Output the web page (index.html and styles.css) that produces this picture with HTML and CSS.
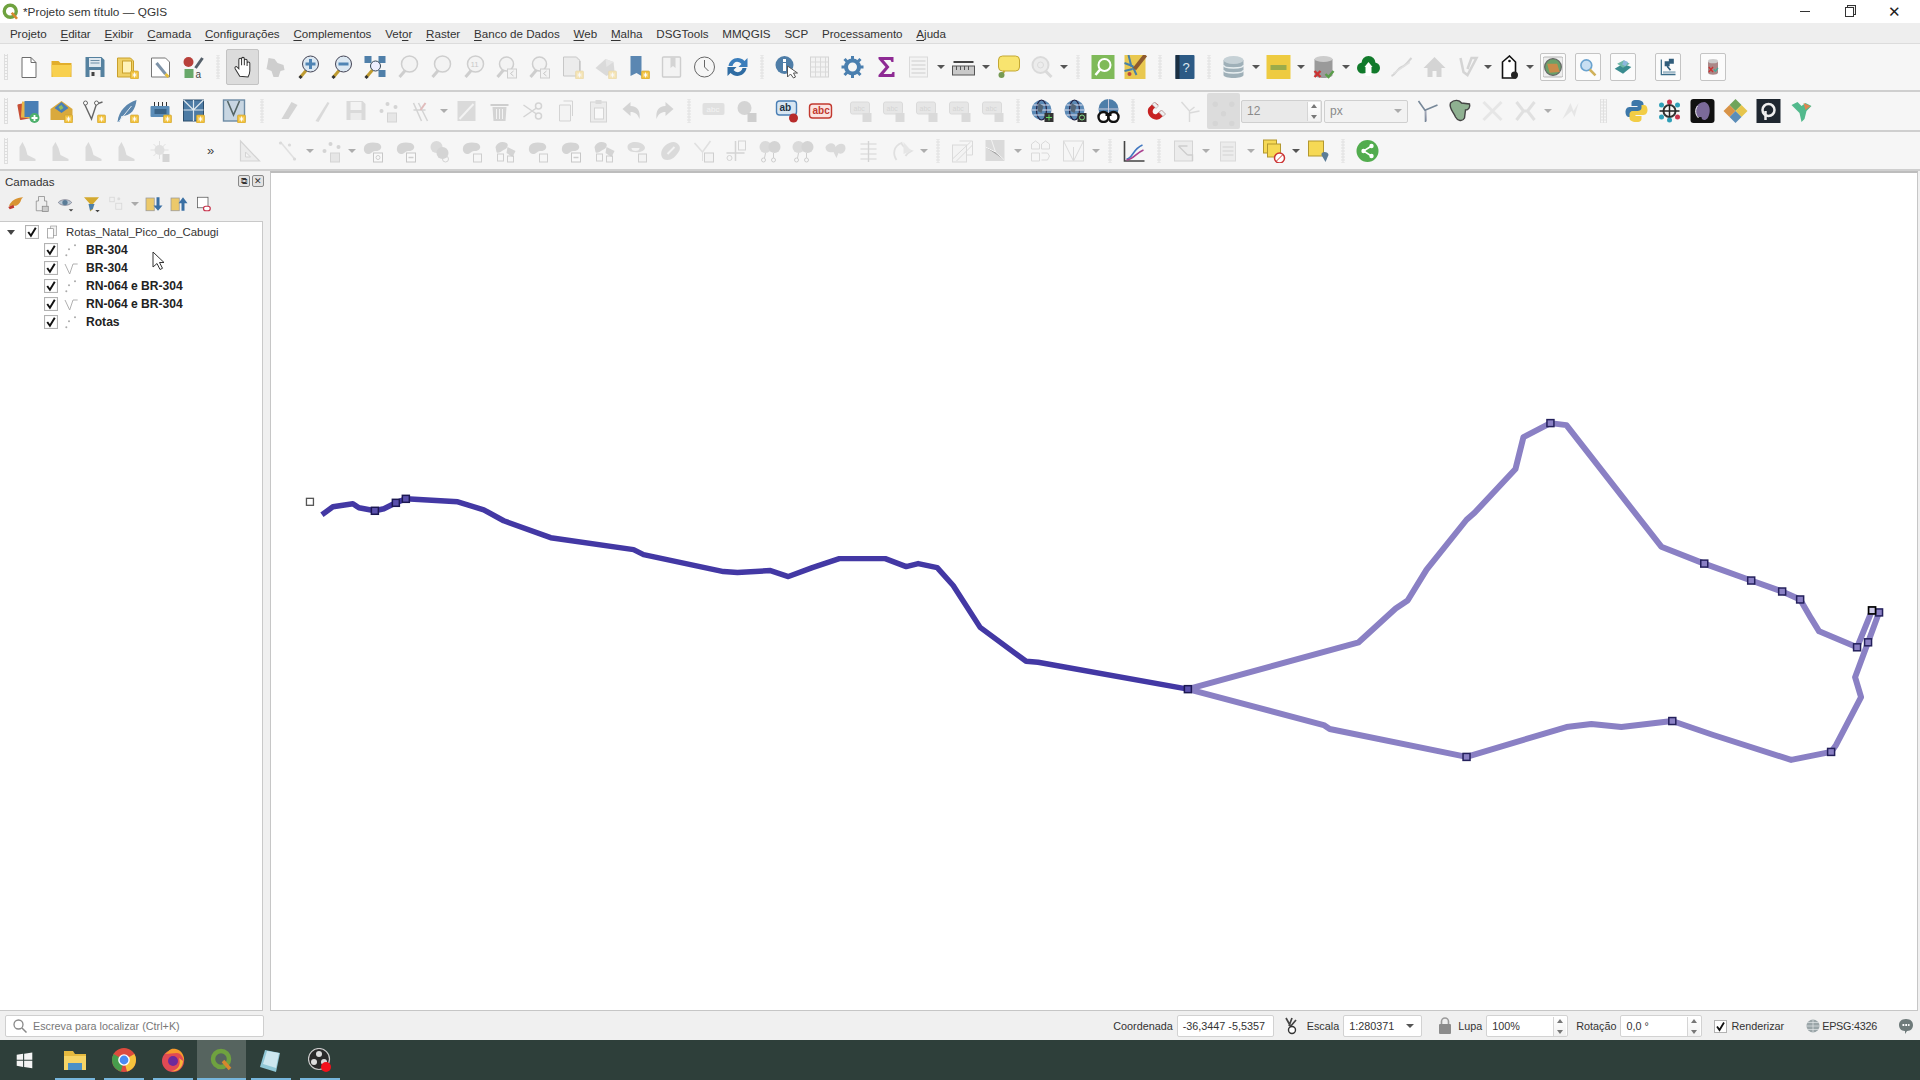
FILE: index.html
```html
<!DOCTYPE html>
<html lang="pt-BR">
<head>
<meta charset="utf-8">
<title>*Projeto sem título — QGIS</title>
<link rel="stylesheet" href="styles.css">
</head>
<body>
<svg class="defs" xmlns="http://www.w3.org/2000/svg">
<defs>
<g id="bdg"><rect x="15" y="16" width="8" height="8" rx="1" fill="#f2c23e" stroke="#c9a02c" stroke-width=".6"/><path d="M19 17.5v5M16.8 20h4.4M17.4 18.4l3.2 3.2M20.6 18.4l-3.2 3.2" stroke="#fff" stroke-width=".9"/></g>
<g id="blob"><path d="M3 7c2-4 9-4 13-3s5 5 2 7-5 0-7 2-5 3-7 1-2-4-1-7z" fill="#9a9a9a"/></g>
<g id="boxs"><rect x="12" y="14" width="9" height="9" fill="#fff" stroke="#777"/></g>
<symbol id="doc" viewBox="0 0 24 24"><path d="M5.500 2.500h9l5 5v15h-14z" fill="#fff" stroke="#6d6d6d"/><path d="M14.500 2.500v5h5" fill="none" stroke="#6d6d6d"/></symbol>
<symbol id="folder" viewBox="0 0 24 24"><path d="M2 6h7l2 2h11v14H2z" fill="#e2ae2c"/><path d="M2 10h20l-1 12H3z" fill="#f8d04f"/></symbol>
<symbol id="floppy" viewBox="0 0 24 24"><path d="M3 2h16l3 3v17H3z" fill="#55819f"/><rect x="6.500" y="3" width="12" height="9" fill="#dfe8ef"/><path d="M8 5.500h9M8 8h9" stroke="#6d8ea6"/><rect x="7" y="15" width="11" height="7" fill="#f3f3f3"/><rect x="9" y="17" width="3" height="4" fill="#444"/></symbol>
<symbol id="prj" viewBox="0 0 24 24"><path d="M2 3h13l3 3v16H2z" fill="#efd065" stroke="#c9a02c"/><rect x="7" y="6" width="9" height="12" fill="#fff3b9" stroke="#c9a02c"/><use href="#bdg"/></symbol>
<symbol id="layout" viewBox="0 0 24 24"><path d="M3 3h14l4 4v15H3z" fill="#fff" stroke="#777"/><path d="M8 8l9 11" stroke="#7e93a8" stroke-width="3"/><path d="M17 19l3 3" stroke="#e3bc3a" stroke-width="3"/></symbol>
<symbol id="style" viewBox="0 0 24 24"><circle cx="7" cy="7" r="5" fill="#b8403a"/><rect x="3" y="14" width="9" height="9" fill="#68a86a"/><path d="M14 13l7-10" stroke="#55606a" stroke-width="3"/><text x="14" y="23" class="svt" font-size="10" fill="#444">a</text></symbol>
<symbol id="hand" viewBox="0 0 24 24"><path d="M9 22l-5-8c-1-2 1-3 2-2l2 2V4c0-2 3-2 3 0v6-7c0-2 3-2 3 0v7-5c0-2 3-2 3 0v6-3c0-2 3-2 3 0v8c0 3-1 5-2 7z" fill="#fff" stroke="#333" stroke-width="1.100"/></symbol>
<symbol id="panmap" viewBox="0 0 24 24"><path d="M5 3l6 1 3 4 6 2 1 5-4 1-2 6h-5l-2-6-5-2 1-5z" fill="#888"/></symbol>
<g id="lens"><path d="M4 22l6-7" stroke="#bf9b30" stroke-width="3"/><path d="M3 23l2-2" stroke="#333" stroke-width="3"/></g>
<symbol id="zin" viewBox="0 0 24 24"><use href="#lens"/><circle cx="14" cy="9" r="8" fill="#dce8f2" stroke="#445"/><path d="M9 9h10M14 4v10" stroke="#4f84b4" stroke-width="3"/></symbol>
<symbol id="zout" viewBox="0 0 24 24"><use href="#lens"/><circle cx="14" cy="9" r="8" fill="#dce8f2" stroke="#445"/><path d="M9 9h10" stroke="#4f84b4" stroke-width="3"/></symbol>
<symbol id="zfull" viewBox="0 0 24 24"><use href="#lens"/><rect x="2" y="1" width="7" height="7" fill="#4f7fa9"/><rect x="16" y="1" width="7" height="7" fill="#4f7fa9"/><rect x="16" y="15" width="7" height="7" fill="#4f7fa9"/><circle cx="13" cy="11" r="5" fill="#eef" stroke="#345"/></symbol>
<symbol id="mag" viewBox="0 0 24 24"><path d="M4 22l7-8" stroke="#888" stroke-width="3"/><circle cx="14" cy="9" r="8" fill="#eee" stroke="#888" stroke-width="1.500"/></symbol>
<symbol id="mag1" viewBox="0 0 24 24"><path d="M4 22l7-8" stroke="#888" stroke-width="3"/><circle cx="14" cy="9" r="8" fill="#eee" stroke="#888" stroke-width="1.500"/><text x="9" y="12" class="svt" font-size="8" fill="#777">11</text></symbol>
<symbol id="magb" viewBox="0 0 24 24"><path d="M3 22l6-7" stroke="#888" stroke-width="3"/><circle cx="12" cy="9" r="7" fill="#eee" stroke="#888" stroke-width="1.500"/><rect x="13" y="14" width="9" height="9" fill="#eee" stroke="#888"/><path d="M19 16l-3 2.500 3 2.500" fill="none" stroke="#777"/></symbol>
<symbol id="newmap" viewBox="0 0 24 24"><path d="M3 2h13l3 3v16H3z" fill="#ddd" stroke="#777"/><path d="M16 3l4 3v13" fill="none" stroke="#999"/><use href="#bdg"/></symbol>
<symbol id="new3d" viewBox="0 0 24 24"><path d="M2 13l10-9 8 3 1 9-8 5z" fill="#aaa"/><path d="M12 4l8 3-7 5z" fill="#ccc"/><use href="#bdg"/></symbol>
<symbol id="bkm" viewBox="0 0 24 24"><path d="M4 1h11v20l-5-3-6 3z" fill="#5b87b2"/><use href="#bdg"/></symbol>
<symbol id="book" viewBox="0 0 24 24"><rect x="3" y="2" width="18" height="20" rx="1" fill="#eee" stroke="#888" stroke-width="1.400"/><path d="M11 2h5v11l-2.500-2-2.500 2z" fill="#999"/></symbol>
<symbol id="clock" viewBox="0 0 24 24"><circle cx="12" cy="12" r="10" fill="#f6f6f6" stroke="#666"/><path d="M12 5v7l4 4" fill="none" stroke="#666"/></symbol>
<symbol id="refresh" viewBox="0 0 24 24"><path d="M3 11C4 4 13 0 19 6l3-3v9h-9l3-3C12 5 8 7 7 11z" fill="#3a7dbb"/><path d="M21 13c-1 7-10 11-16 5l-3 3v-9h9l-3 3c4 4 8 2 9-2z" fill="#2f6ca3"/></symbol>
<symbol id="ident" viewBox="0 0 24 24"><circle cx="10" cy="10" r="9" fill="#4f7ea8"/><rect x="8.500" y="8" width="3" height="8" fill="#fff"/><rect x="8.500" y="4" width="3" height="3" fill="#fff"/><path d="M13 11v11l3-3 3 4 2-1-2-4h4z" fill="#fff" stroke="#555"/></symbol>
<symbol id="abacus" viewBox="0 0 24 24"><rect x="3" y="2" width="18" height="20" fill="#eee" stroke="#999"/><path d="M3 7h18M3 12h18M3 17h18M8 2v20M13 2v20M18 2v20" stroke="#aaa"/></symbol>
<symbol id="gear" viewBox="0 0 24 24"><circle cx="12" cy="12" r="6.500" fill="none" stroke="#4a7faf" stroke-width="4"/><path d="M12 1v5M12 18v5M1 12h5M18 12h5M4 4l4 4M16 16l4 4M20 4l-4 4M8 16l-4 4" stroke="#4a7faf" stroke-width="3"/></symbol>
<symbol id="sigma" viewBox="0 0 24 24"><path d="M5 2h15v5h-2l-1-2H10l6 7-6 7h8l1-2h2v5H5v-2l7-8-7-8z" fill="#8e2a94"/></symbol>
<symbol id="attr" viewBox="0 0 24 24"><rect x="3" y="2" width="18" height="20" fill="#eee" stroke="#aaa"/><path d="M5 6h14M5 10h14M5 14h14M5 18h14" stroke="#aaa" stroke-width="1.500"/></symbol>
<symbol id="ruler" viewBox="0 0 24 24"><path d="M2 7h20" stroke="#444" stroke-width="2"/><rect x="1" y="11" width="22" height="9" fill="#c9c9c9" stroke="#555"/><path d="M5 11v4M9 11v4M13 11v4M17 11v4" stroke="#555"/></symbol>
<symbol id="tip" viewBox="0 0 24 24"><rect x="2" y="1" width="21" height="15" rx="4" fill="#f8e46f" stroke="#c3a834"/><path d="M8 16l-3 4" stroke="#c3a834" stroke-width="2"/><circle cx="5" cy="20" r="3" fill="#769a53"/></symbol>
<symbol id="csearch" viewBox="0 0 24 24"><circle cx="11" cy="10" r="8" fill="#ddd" stroke="#aaa" stroke-width="2"/><circle cx="11" cy="10" r="3" fill="none" stroke="#aaa"/><path d="M16 16l6 6" stroke="#aaa" stroke-width="3"/></symbol>
<symbol id="lgreen" viewBox="0 0 24 24"><rect x="1" y="0" width="23" height="24" fill="#7fba59"/><circle cx="14" cy="10" r="6" fill="none" stroke="#fff" stroke-width="2"/><path d="M5 20l5-6" stroke="#fff" stroke-width="2.500"/></symbol>
<symbol id="colmap" viewBox="0 0 24 24"><rect x="1" y="0" width="21" height="24" fill="#e9c84f"/><path d="M1 8l8 3 4 9M5 0l3 12M1 16l8-2" stroke="#4780a8" stroke-width="2" fill="none"/><path d="M11 14L22 0" stroke="#8e5a2e" stroke-width="4"/><circle cx="6" cy="19" r="2" fill="#c04b3a"/></symbol>
<symbol id="help" viewBox="0 0 24 24"><rect x="3" y="0" width="19" height="24" rx="1" fill="#2c5a85"/><rect x="3" y="0" width="4" height="24" fill="#1b2f42"/><text x="10" y="17" class="svt" font-size="13" fill="#dfe8ef">?</text></symbol>
<symbol id="db" viewBox="0 0 24 24"><path d="M2 5v15c0 4 20 4 20 0V5z" fill="#9fb0b8"/><ellipse cx="12" cy="5" rx="10" ry="4" fill="#c6d1d6"/><path d="M2 10c0 4 20 4 20 0M2 15c0 4 20 4 20 0" fill="none" stroke="#e8eef0" stroke-width="1.500"/></symbol>
<symbol id="ybar" viewBox="0 0 24 24"><rect x="0" y="0" width="24" height="24" fill="#eecb41"/><rect x="4" y="10" width="16" height="5" fill="#9bab4a"/></symbol>
<symbol id="dbx" viewBox="0 0 24 24"><path d="M3 4v16c0 4 18 4 18 0V4z" fill="#9a9a9a"/><ellipse cx="12" cy="4" rx="9" ry="3" fill="#ccc"/><path d="M3 16l6 6M9 16l-6 6" stroke="#c33" stroke-width="2.400"/><path d="M14 19l3 3 5-6" fill="none" stroke="#5a9e4a" stroke-width="2.400"/></symbol>
<symbol id="cloud" viewBox="0 0 24 24"><circle cx="6" cy="13" r="5.500" fill="#117a2b"/><circle cx="12" cy="8" r="7" fill="#117a2b"/><circle cx="18" cy="13" r="5.500" fill="#117a2b"/><rect x="6" y="13" width="12" height="5" fill="#117a2b"/><path d="M9 12h6v9H9z" fill="#fff"/><path d="M12 7l4 5H8z" fill="#fff"/></symbol>
<symbol id="wire" viewBox="0 0 24 24"><path d="M2 21c5-2 6-8 10-9s6-5 10-9" fill="none" stroke="#999" stroke-width="2"/><path d="M2 13l20 0" stroke="#bbb" stroke-width="1.500" transform="rotate(-35 12 13)"/></symbol>
<symbol id="home" viewBox="0 0 24 24"><path d="M12 2L1 13h4v9h5v-6h4v6h5v-9h4z" fill="#999"/></symbol>
<symbol id="plug" viewBox="0 0 24 24"><path d="M5 3l3 14 4 3 9-17-5 0-4 11" fill="none" stroke="#999" stroke-width="2.500"/></symbol>
<symbol id="tag" viewBox="0 0 24 24"><path d="M12 1l6 6v16H5V7z" fill="#fff" stroke="#111" stroke-width="1.600"/><circle cx="12" cy="6" r="1.300" fill="#111"/><circle cx="17" cy="20" r="3.500" fill="#222"/></symbol>
<symbol id="globe" viewBox="0 0 24 24"><rect width="24" height="24" rx="2" fill="#eee" stroke="#aaa"/><circle cx="12" cy="12" r="10" fill="#6aa06a" stroke="#666" stroke-width="1.500"/><path d="M5 8l12 0 3 10-12 1z" fill="#c98b4a"/></symbol>
<symbol id="fmag" viewBox="0 0 24 24"><circle cx="10" cy="10" r="6.500" fill="#c8dff2" stroke="#6ba3cf" stroke-width="2"/><path d="M14 15l7 7" stroke="#d0b15a" stroke-width="3"/></symbol>
<symbol id="flay" viewBox="0 0 24 24"><path d="M2 14l10-6 10 4-10 8z" fill="#3a8c8f"/><path d="M5 8l8-4 7 4-8 5z" fill="#70b8a8"/><path d="M13 4l5 2-3 5-4-2z" fill="#8db7de"/></symbol>
<symbol id="fchart" viewBox="0 0 24 24"><path d="M4 3v18h17" fill="none" stroke="#3b6c88" stroke-width="1.500"/><path d="M9 6h4v4H9zM14 3h4v4h-4zM11 11l4 5" stroke="#315d7b" stroke-width="2" fill="#315d7b"/><rect x="6" y="17" width="15" height="3" fill="#a1bac8"/></symbol>
<symbol id="fdb" viewBox="0 0 24 24"><path d="M6 5v14c0 3 12 3 12 0V5z" fill="#a88"/><ellipse cx="12" cy="5" rx="6" ry="2.500" fill="#ccc"/><path d="M7 12l5 6M12 12l-5 6" stroke="#c33" stroke-width="1.600"/><path d="M13 15l2 2 3-4" stroke="#4a9" stroke-width="1.600" fill="none"/></symbol>
<symbol id="layers" viewBox="0 0 24 24"><rect x="2" y="4" width="14" height="16" rx="1" fill="#c74f36" transform="rotate(-10 9 12)"/><rect x="5" y="3" width="14" height="16" fill="#e9b74a" transform="rotate(4 12 11)"/><rect x="8" y="2" width="14" height="16" fill="#4a7fb5"/><circle cx="18" cy="19" r="5" fill="#4eb06c"/><path d="M18 16v6M15 19h6" stroke="#fff" stroke-width="1.800"/></symbol>
<symbol id="addpkg" viewBox="0 0 24 24"><path d="M1 10l11-8 11 8v11H1z" fill="#d9a93c"/><path d="M5 9l7-6 7 6-7 5z" fill="#4a7fb5"/><path d="M9 8l3-2 2 3-3 2z" fill="#8fbe5f"/><use href="#bdg"/></symbol>
<symbol id="addvec" viewBox="0 0 24 24"><path d="M2 5l7 15 5-15 6-2" fill="none" stroke="#666" stroke-width="1.400"/><circle cx="3" cy="4" r="2" fill="#fff" stroke="#666"/><circle cx="14" cy="4" r="2" fill="#fff" stroke="#666"/><use href="#bdg"/></symbol>
<symbol id="feather" viewBox="0 0 24 24"><path d="M2 23C3 11 12 4 21 1c-1 9-5 16-15 16l-2 6z" fill="#5b86ad"/><path d="M3 23l13-16" stroke="#dfe8ef"/><use href="#bdg"/></symbol>
<symbol id="chip" viewBox="0 0 24 24"><rect x="2" y="7" width="19" height="11" rx="1" fill="#5b8db8"/><path d="M6 3v4M10 3v4M14 3v4M18 3v4" stroke="#333"/><rect x="6" y="10" width="12" height="5" fill="#3a6488"/><use href="#bdg"/></symbol>
<symbol id="mesh" viewBox="0 0 24 24"><rect x="2" y="1" width="20" height="21" fill="#4d7ba4" stroke="#2b4d6b"/><path d="M2 11h20M12 1v21M2 1l10 10M22 1L12 11" stroke="#dde7ee" stroke-width="1.200"/><use href="#bdg"/></symbol>
<symbol id="vframe" viewBox="0 0 24 24"><rect x="1" y="1" width="21" height="21" fill="#c8d6e2" stroke="#6c8aa4" stroke-width="1.400"/><path d="M5 2l6 14 6-14" fill="none" stroke="#566" stroke-width="1.600"/><use href="#bdg"/></symbol>
<symbol id="dpen" viewBox="0 0 24 24"><path d="M4 20L14 3l6 3-9 14z" fill="#999"/></symbol>
<symbol id="dpen2" viewBox="0 0 24 24"><path d="M5 22L17 3l2 1L8 23z" fill="#aaa"/></symbol>
<symbol id="dsave" viewBox="0 0 24 24"><path d="M3 2h16l3 3v16H3z" fill="#aaa"/><rect x="7" y="3" width="11" height="8" fill="#eee"/><rect x="7" y="14" width="11" height="7" fill="#ddd"/></symbol>
<symbol id="dpts" viewBox="0 0 24 24"><circle cx="5" cy="12" r="2" fill="#999"/><circle cx="11" cy="5" r="2" fill="#999"/><circle cx="19" cy="8" r="2" fill="#999"/><rect x="11" y="14" width="9" height="9" fill="#ccc" stroke="#999"/></symbol>
<symbol id="dedit" viewBox="0 0 24 24"><path d="M4 4l8 18M4 11h12M9 4l9 18" stroke="#999" stroke-width="1.500" fill="none"/><path d="M16 4l-5 7" stroke="#b55" stroke-width="2"/></symbol>
<symbol id="dsheet" viewBox="0 0 24 24"><rect x="3" y="2" width="18" height="20" fill="#aaa"/><path d="M5 20L19 5" stroke="#eee" stroke-width="2"/></symbol>
<symbol id="trash" viewBox="0 0 24 24"><path d="M3 5h18v2H3z" fill="#888"/><path d="M5 8h14l-1 14H6z" fill="#999"/><path d="M9 10v10M12 10v10M15 10v10" stroke="#eee"/></symbol>
<symbol id="cut" viewBox="0 0 24 24"><circle cx="18" cy="7" r="3" fill="none" stroke="#999" stroke-width="1.500"/><circle cx="18" cy="17" r="3" fill="none" stroke="#999" stroke-width="1.500"/><path d="M3 6l13 9M3 18l13-9" stroke="#999" stroke-width="1.500"/></symbol>
<symbol id="copy" viewBox="0 0 24 24"><path d="M6 6h11v16H6z" fill="#eee" stroke="#999"/><path d="M10 2h9v15" fill="none" stroke="#999"/></symbol>
<symbol id="paste" viewBox="0 0 24 24"><rect x="4" y="3" width="16" height="20" fill="#ddd" stroke="#999"/><rect x="8" y="9" width="9" height="11" fill="#fff" stroke="#999"/><rect x="9" y="1" width="6" height="4" fill="#aaa"/></symbol>
<symbol id="undo" viewBox="0 0 24 24"><path d="M3 10l8-7v4c7 0 10 5 9 13-2-5-4-7-9-7v4z" fill="#999"/></symbol>
<symbol id="redo" viewBox="0 0 24 24"><path d="M21 10l-8-7v4C6 7 3 12 4 20c2-5 4-7 9-7v4z" fill="#999"/></symbol>
<symbol id="abcg" viewBox="0 0 24 24"><rect x="1" y="4" width="22" height="12" rx="2" fill="#bbb"/><text x="5" y="13" class="svt" font-size="8" fill="#eee">abc</text></symbol>
<symbol id="stk" viewBox="0 0 24 24"><circle cx="10" cy="9" r="7" fill="#999"/><rect x="13" y="14" width="9" height="9" fill="#888"/></symbol>
<symbol id="abpin" viewBox="0 0 24 24"><rect x="1" y="2" width="20" height="14" rx="3" fill="#d8e6f2" stroke="#4a7fb5" stroke-width="1.400"/><text x="4" y="12" class="svt svb" font-size="10" fill="#234">ab</text><circle cx="18" cy="19" r="4.500" fill="#b72b2b"/></symbol>
<symbol id="abcr" viewBox="0 0 24 24"><rect x="1" y="5" width="22" height="14" rx="3" fill="#fbe3e1" stroke="#c2392f" stroke-width="1.400"/><text x="4" y="15" class="svt svb" font-size="10" fill="#c2392f">abc</text></symbol>
<symbol id="abcg2" viewBox="0 0 24 24"><rect x="1" y="3" width="19" height="12" rx="2" fill="#ccc" stroke="#aaa"/><text x="4" y="12" class="svt" font-size="7" fill="#999">abc</text><rect x="13" y="14" width="9" height="9" fill="#aaa"/></symbol>
<symbol id="gglobe" viewBox="0 0 24 24"><circle cx="11" cy="11" r="10" fill="#5b89b5"/><ellipse cx="11" cy="11" rx="5" ry="10" fill="none" stroke="#224" stroke-width="1.200"/><path d="M1 11h20M3 6h16M3 16h16" stroke="#dde" stroke-width="1"/><path d="M8 4l5 3-2 7-4-2z" fill="#567"/></symbol>
<symbol id="gadd" viewBox="0 0 24 24"><use href="#gglobe"/><rect x="14" y="14" width="9" height="9" fill="#333"/><path d="M18.500 15.500v6M15.500 18.500h6" stroke="#6d6"/></symbol>
<symbol id="gfind" viewBox="0 0 24 24"><use href="#gglobe"/><rect x="14" y="14" width="9" height="9" fill="#333"/><circle cx="18.500" cy="18.500" r="2.500" fill="none" stroke="#8d8"/></symbol>
<symbol id="gbin" viewBox="0 0 24 24"><circle cx="12" cy="10" r="10" fill="#4e7ea9"/><path d="M2 10h20M12 0v20" stroke="#ccd"/><circle cx="7" cy="18" r="5" fill="#fff" stroke="#111" stroke-width="2.400"/><circle cx="17" cy="18" r="5" fill="#fff" stroke="#111" stroke-width="2.400"/><rect x="9" y="14" width="6" height="3" fill="#111"/></symbol>
<symbol id="magnet" viewBox="0 0 24 24"><path d="M9 3L3 9c-3 6 4 14 11 11l6-5-4-4-5 4c-3 1-5-2-3-5l5-4z" fill="#c72222"/><path d="M9 3l4 4-2.500 2.500-4-4zM20 15l-4-4-2.500 2.500 4 4z" fill="#eee" stroke="#999" stroke-width=".5"/></symbol>
<symbol id="snap" viewBox="0 0 24 24"><path d="M11 23V12L3 3M11 12l5-4M11 14l10-2" fill="none" stroke="#aaa" stroke-width="1.400"/></symbol>
<symbol id="spts" viewBox="0 0 24 24"><circle cx="6" cy="7" r="2" fill="#bbb"/><circle cx="18" cy="7" r="2" fill="#bbb"/><circle cx="12" cy="14" r="2" fill="#bbb"/><circle cx="6" cy="21" r="2" fill="#bbb"/><circle cx="18" cy="21" r="2" fill="#bbb"/></symbol>
<symbol id="ytree" viewBox="0 0 24 24"><path d="M11 23V12L4 2M11 11l12-5" fill="none" stroke="#789" stroke-width="1.600"/><path d="M11 12l1 10" stroke="#aab"/></symbol>
<symbol id="gmap" viewBox="0 0 24 24"><path d="M3 4c4-4 9-3 11 0l8 1c1 3-1 6-4 6l-1 8c-2 4-7 3-9-1C6 13 1 9 3 4z" fill="#8fb191" stroke="#444" stroke-width="1.400"/></symbol>
<symbol id="xgr" viewBox="0 0 24 24"><path d="M3 3l18 18M21 3L3 21" stroke="#ccc" stroke-width="3"/></symbol>
<symbol id="xgr2" viewBox="0 0 24 24"><path d="M3 3l7 9-7 9M21 3l-7 9 7 9M10 12h4" stroke="#bbb" stroke-width="3" fill="none"/></symbol>
<symbol id="bones" viewBox="0 0 24 24"><path d="M4 20L12 4l3 8 5-8-4 14-3-6z" fill="#ccc"/></symbol>
<symbol id="py" viewBox="0 0 24 24"><path d="M12 1C7 1 7 3 7 5v2h6v1H5c-3 0-4 3-4 5s1 5 3 5h3v-3c0-2 2-3 4-3h5c2 0 3-2 3-3V5c0-2-2-4-7-4z" fill="#3c77a9"/><path d="M12 23c5 0 5-2 5-4v-2h-6v-1h8c3 0 4-3 4-5s-1-5-3-5h-3v3c0 2-2 3-4 3H8c-2 0-3 2-3 3v4c0 2 2 4 7 4z" fill="#f2cd46"/></symbol>
<symbol id="net" viewBox="0 0 24 24"><circle cx="12" cy="12" r="6" fill="none" stroke="#333" stroke-width="2"/><path d="M12 2v20M2 12h20" stroke="#222" stroke-width="1.500"/><circle cx="4" cy="6" r="2.500" fill="#2f9fb8"/><circle cx="20" cy="6" r="2.500" fill="#2f9fb8"/><circle cx="4" cy="18" r="2.500" fill="#2f9fb8"/><circle cx="20" cy="18" r="2.500" fill="#c7334c"/><circle cx="12" cy="3" r="2.500" fill="#c7334c"/><circle cx="12" cy="21" r="2.500" fill="#2f9fb8"/></symbol>
<symbol id="dark" viewBox="0 0 24 24"><rect width="24" height="24" rx="3" fill="#111"/><path d="M5 12C5 6 10 3 14 3c4 1 6 6 5 11s-3 7-5 7c-2 0-3-1-3-3l-3 0c-2 0-3-3-3-6z" fill="#7b6a99"/><path d="M7 7c-3 4-2 9 1 12" fill="none" stroke="#eee"/></symbol>
<symbol id="dia" viewBox="0 0 24 24"><path d="M12 0l6 6-6 6-6-6z" fill="#6fa45a"/><path d="M6 6l6 6-6 6-6-6z" fill="#d89347"/><path d="M18 6l6 6-6 6-6-6z" fill="#e6c54c"/><path d="M12 12l6 6-6 6-6-6z" fill="#5b8db8"/></symbol>
<symbol id="pblack" viewBox="0 0 24 24"><rect width="24" height="24" fill="#1f2730"/><circle cx="12" cy="11" r="6" fill="none" stroke="#eee" stroke-width="2.500"/><path d="M9 12v9" stroke="#eee" stroke-width="2.500"/></symbol>
<symbol id="tree" viewBox="0 0 24 24"><path d="M2 6l6-3 4 4 4-3 6 3-5 5-2 8-3 3-2-9z" fill="#52b98c"/><path d="M14 4l7 3-5 4z" fill="#e0854f"/></symbol>
<symbol id="chart" viewBox="0 0 24 24"><path d="M2 2v20h20" fill="none" stroke="#444" stroke-width="1.600"/><path d="M4 20c6 0 6-10 16-14" fill="none" stroke="#4177c0" stroke-width="1.600"/><path d="M4 21c8-1 9-7 17-10" fill="none" stroke="#aa4090" stroke-width="1.600"/></symbol>
<symbol id="ydel" viewBox="0 0 24 24"><rect x="2" y="1" width="13" height="13" fill="#f6d955" stroke="#b3982f"/><rect x="6" y="5" width="13" height="13" fill="#f6d955" stroke="#b3982f"/><circle cx="18" cy="19" r="5" fill="#fff" stroke="#c33" stroke-width="1.500"/><path d="M15 22l6-6" stroke="#c33"/></symbol>
<symbol id="ypin" viewBox="0 0 24 24"><rect x="2" y="2" width="15" height="15" fill="#f6d955" stroke="#b3982f"/><path d="M19 23l-4-7c-1-4 7-4 7 0z" fill="#5c7d96"/></symbol>
<symbol id="share" viewBox="0 0 24 24"><circle cx="12" cy="12" r="11" fill="#52ac4e"/><path d="M16 7l-8 5 8 5" fill="none" stroke="#fff" stroke-width="1.600"/><circle cx="16" cy="7" r="2.200" fill="#fff"/><circle cx="8" cy="12" r="2.200" fill="#fff"/><circle cx="16" cy="17" r="2.200" fill="#fff"/></symbol>
<symbol id="dhist" viewBox="0 0 24 24"><path d="M3 22V8l3-5 3 6 2 7 8 4v2z" fill="#aaa"/></symbol>
<symbol id="dsun" viewBox="0 0 24 24"><circle cx="11" cy="11" r="5" fill="#bbb"/><path d="M11 2v18M2 11h18M5 5l12 12M17 5L5 17" stroke="#bbb"/><rect x="14" y="15" width="7" height="8" fill="#999"/></symbol>
<symbol id="set" viewBox="0 0 24 24"><path d="M3 22V2l19 20z" fill="#ddd" stroke="#999" stroke-width="1.200"/><path d="M8 18v-5l5 5z" fill="#f4f4f4" stroke="#999"/></symbol>
<symbol id="dnode" viewBox="0 0 24 24"><path d="M3 3l10 12 5 6" stroke="#bbb" stroke-width="1.500" fill="none"/><circle cx="3" cy="4" r="1.600" fill="#aaa"/><circle cx="12" cy="6" r="1.600" fill="#aaa"/><circle cx="17" cy="20" r="1.600" fill="#aaa"/></symbol>
<symbol id="b1" viewBox="0 0 24 24"><use href="#blob"/><use href="#boxs"/><circle cx="16.500" cy="18.500" r="2" fill="none" stroke="#888"/></symbol>
<symbol id="b2" viewBox="0 0 24 24"><use href="#blob"/><use href="#boxs"/><path d="M14 18.500h5" stroke="#888" stroke-width="1.500"/></symbol>
<symbol id="b3" viewBox="0 0 24 24"><circle cx="9" cy="8" r="6" fill="#aaa"/><circle cx="15" cy="14" r="6" fill="#999"/><circle cx="18" cy="20" r="3" fill="none" stroke="#999"/></symbol>
<symbol id="b4" viewBox="0 0 24 24"><use href="#blob"/><rect x="13" y="15" width="8" height="8" fill="none" stroke="#888"/></symbol>
<symbol id="b5" viewBox="0 0 24 24"><path d="M2 8c2-5 7-6 11-4 3 2 0 6-3 7-3 2-6 4-7 2zM14 8l8 4-3 6-6-4z" fill="#999"/><rect x="4" y="15" width="6" height="7" fill="none" stroke="#888"/><rect x="14" y="17" width="6" height="6" fill="none" stroke="#888"/></symbol>
<symbol id="b6" viewBox="0 0 24 24"><path d="M2 8c0-5 8-6 13-4s6 6 2 8-5 1-8 1-7-1-7-5z" fill="#aaa"/><path d="M6 9a4 3 0 008 0" fill="#eee"/><rect x="13" y="15" width="8" height="8" fill="#eee" stroke="#888"/></symbol>
<symbol id="b7" viewBox="0 0 24 24"><path d="M3 17C1 10 9 3 15 3c6 1 8 6 5 10-3 5-7 8-11 8-3 0-5-1-6-4z" fill="#aaa"/><path d="M9 15l7-7" stroke="#eee" stroke-width="2"/></symbol>
<symbol id="b8" viewBox="0 0 24 24"><path d="M3 4l8 9 8-11" fill="none" stroke="#bbb" stroke-width="1.600"/><path d="M11 13v9" stroke="#bbb"/><rect x="13" y="14" width="9" height="9" fill="#eee" stroke="#888"/></symbol>
<symbol id="b9" viewBox="0 0 24 24"><path d="M11 2v20M2 14h18" stroke="#999" stroke-width="1.500"/><rect x="14" y="2" width="7" height="9" fill="none" stroke="#999"/><circle cx="5" cy="19" r="2.500" fill="none" stroke="#999"/></symbol>
<symbol id="b10" viewBox="0 0 24 24"><circle cx="8" cy="8" r="6" fill="#aaa"/><circle cx="17" cy="8" r="6" fill="#999"/><path d="M8 14l-1 5M16 14l0 5" stroke="#888"/><circle cx="6" cy="21" r="2" fill="none" stroke="#888"/><circle cx="16" cy="21" r="2" fill="none" stroke="#888"/></symbol>
<symbol id="b11" viewBox="0 0 24 24"><path d="M2 8c3-6 10-4 10 0 2-4 10-5 10 1 0 4-4 7-7 5l-2 5-3-6c-3 1-8 0-8-5z" fill="#aaa"/></symbol>
<symbol id="b12" viewBox="0 0 24 24"><path d="M4 5h16M4 10h16M4 15h16M4 20h16" stroke="#bbb" stroke-width="1.400"/><path d="M12 2v21" stroke="#999" stroke-width="1.400"/></symbol>
<symbol id="b13" viewBox="0 0 24 24"><path d="M7 21c-4-6-3-14 5-17 0 0 1 5 10 8-4 2-5 3-6 5" fill="none" stroke="#bbb" stroke-width="1.800"/><path d="M14 3l8 9-8 3z" fill="#ccc"/></symbol>
<symbol id="b14" viewBox="0 0 24 24"><rect x="2" y="6" width="14" height="17" fill="#eee" stroke="#aaa"/><path d="M9 2h13v14H16" fill="none" stroke="#aaa"/><path d="M2 20L20 3M6 22L22 6" stroke="#aaa"/></symbol>
<symbol id="b15" viewBox="0 0 24 24"><rect x="2" y="1" width="19" height="21" fill="#aaa"/><path d="M2 8l10 5 9 8M8 1l4 12" stroke="#eee"/></symbol>
<symbol id="b16" viewBox="0 0 24 24"><path d="M7 2l4 3v5H3V5zM17 2l4 3v5h-8V5zM3 14h8v8H3zM13 14h6l2 3-2 4h-6" fill="none" stroke="#aaa"/></symbol>
<symbol id="b17" viewBox="0 0 24 24"><rect x="2" y="2" width="20" height="20" fill="none" stroke="#aaa"/><path d="M2 2l10 20 10-20M12 22V8" stroke="#aaa" fill="none"/></symbol>
<symbol id="b18" viewBox="0 0 24 24"><rect x="3" y="2" width="18" height="20" fill="#ddd" stroke="#999"/><path d="M7 7h9M7 7l9 9M16 16h5v6" stroke="#888" stroke-width="1.400" fill="none"/></symbol>
<symbol id="b19" viewBox="0 0 24 24"><rect x="4" y="3" width="15" height="19" fill="#ddd" stroke="#aaa"/><path d="M6 8h11M6 12h11M6 16h11" stroke="#aaa" stroke-width="1.500"/></symbol>
<symbol id="t1" viewBox="0 0 24 24"><path d="M2 15c2-7 10-12 19-12-4 3-2 5-6 9-2 2-4 3-8 2z" fill="#d89332"/><path d="M1 16l7-3 1 4-6 2z" fill="#c2392f"/></symbol>
<symbol id="t2" viewBox="0 0 24 24"><path d="M5 21V8h3V2h8v6h3v13z" fill="#eee" stroke="#888"/><rect x="13" y="15" width="8" height="7" fill="#ccc" stroke="#888"/></symbol>
<symbol id="t3" viewBox="0 0 24 24"><path d="M1 10c4-5 14-5 18 0-4 5-14 5-18 0z" fill="#b9c8d4" stroke="#778"/><circle cx="10" cy="10" r="3.500" fill="#5a7c97"/><path d="M15 19h6l-3 3z" fill="#444"/></symbol>
<symbol id="t4" viewBox="0 0 24 24"><path d="M2 3h20l-8 9v7l-4 3V12z" fill="#d3a92f"/><path d="M8 12h8l-2 6-4 3z" fill="#4d7fa8"/><path d="M17 20h6l-3 3z" fill="#444"/></symbol>
<symbol id="t5" viewBox="0 0 24 24"><rect x="3" y="3" width="6" height="6" fill="none" stroke="#aaa"/><rect x="11" y="11" width="8" height="8" fill="none" stroke="#aaa"/><circle cx="15" cy="5" r="2" fill="#bbb"/></symbol>
<symbol id="t6" viewBox="0 0 24 24"><rect x="2" y="4" width="11" height="17" fill="#ecc96a" stroke="#999"/><path d="M18 3v12" stroke="#3a6fa3" stroke-width="4"/><path d="M12 14h12l-6 7z" fill="#3a6fa3"/></symbol>
<symbol id="t7" viewBox="0 0 24 24"><rect x="2" y="4" width="11" height="17" fill="#ecc96a" stroke="#999"/><path d="M18 21V9" stroke="#3a6fa3" stroke-width="4"/><path d="M12 11h12l-6-8z" fill="#3a6fa3"/></symbol>
<symbol id="t8" viewBox="0 0 24 24"><rect x="4" y="3" width="14" height="14" fill="#fff" stroke="#555"/><rect x="12" y="15" width="9" height="6" rx="3" fill="#fff" stroke="#c7334c" stroke-width="1.600"/></symbol>
<symbol id="gr" viewBox="0 0 24 24"><rect x="10" y="3" width="9" height="14" fill="#f1f1f1" stroke="#999"/><rect x="5" y="7" width="9" height="14" fill="#fff" stroke="#888"/></symbol>
<symbol id="pts" viewBox="0 0 24 24"><circle cx="5" cy="20" r="1.500" fill="#aaa"/><circle cx="9" cy="11" r="1.500" fill="#aaa"/><circle cx="18" cy="5" r="1.500" fill="#aaa"/></symbol>
<symbol id="lin" viewBox="0 0 24 24"><path d="M3 6l7 15 5-15h7" fill="none" stroke="#aaa" stroke-width="1.400"/></symbol>
<symbol id="chk" viewBox="0 0 13 13"><rect x=".5" y=".5" width="12" height="12" fill="#fff" stroke="#b2b2b2"/><path d="M3 6.500l2.500 3.500L10 2.500" fill="none" stroke="#111" stroke-width="1.800"/></symbol>
<symbol id="winq" viewBox="0 0 24 24"><circle cx="11" cy="11" r="8" fill="none" stroke="#6fa23f" stroke-width="4.500"/><path d="M13 13l7 8" stroke="#d7872d" stroke-width="3.500"/></symbol>
<symbol id="wfolder" viewBox="0 0 24 24"><path d="M1 3h9l2 3h11v16H1z" fill="#e5b93f"/><path d="M1 8h22v14H1z" fill="#f6d466"/><rect x="5" y="15" width="14" height="7" fill="#4b90c7"/></symbol>
<symbol id="chrome" viewBox="0 0 24 24"><circle cx="12" cy="12" r="12" fill="#dd4b3e"/><path d="M12 12L1.600 6A12 12 0 0 0 9 23.600z" fill="#479d4c"/><path d="M12 12l3 11.600A12 12 0 0 0 22.400 6z" fill="#f6c33c"/><circle cx="12" cy="12" r="5.800" fill="#fff"/><circle cx="12" cy="12" r="4.400" fill="#4a8bf2"/></symbol>
<symbol id="ff" viewBox="0 0 24 24"><circle cx="12" cy="13" r="11" fill="#e14a54"/><path d="M4 6c5-3 4-6 11-5 6 1 9 8 8 13-1-6-4-9-7-9z" fill="#f69a2c"/><path d="M22 13a10 10 0 01-12 10c8-1 10-7 8-13z" fill="#f6b33a"/><circle cx="12" cy="13" r="5" fill="#6d2a9c"/></symbol>
<symbol id="note" viewBox="0 0 24 24"><path d="M6 2l15 3-4 19L1 19z" fill="#8fc7d6"/><path d="M8 3l12 2-3 15L4 16z" fill="#cde7ef"/></symbol>
<symbol id="obs" viewBox="0 0 24 24"><circle cx="11" cy="11" r="10.500" fill="#2a2a2a" stroke="#ccc" stroke-width="1.200"/><circle cx="11" cy="6" r="3" fill="#ddd"/><circle cx="6" cy="14" r="3" fill="#ddd"/><circle cx="16" cy="14" r="3" fill="#ddd"/><circle cx="18" cy="19" r="5" fill="#f3121c"/></symbol>
<symbol id="win" viewBox="0 0 24 24"><path d="M1 4l9-1.500V11H1zM11.500 2.300L23 .8V11H11.500zM1 12.500h9V21l-9-1.500zM11.500 12.500H23V23l-11.500-1.700z" fill="#f4f4f4"/></symbol>
<symbol id="srch" viewBox="0 0 14 14"><circle cx="5.500" cy="5.500" r="4.500" fill="none" stroke="#888" stroke-width="1.300"/><path d="M9 9l4.500 4.500" stroke="#888" stroke-width="1.500"/></symbol>
<symbol id="lock" viewBox="0 0 14 18"><rect x="1" y="7" width="12" height="10" rx="1" fill="#8c8c8c"/><path d="M3.500 7V4.500a3.500 3.500 0 017 0V7" fill="none" stroke="#9a9a9a" stroke-width="1.600"/></symbol>
<symbol id="coordic" viewBox="0 0 16 18"><path d="M3 1l5 9M9 1L6 9M13 3l-6 7" stroke="#444" stroke-width="1.700"/><circle cx="9" cy="13" r="3.500" fill="#fff" stroke="#333" stroke-width="1.400"/></symbol>
<symbol id="gsmall" viewBox="0 0 14 14"><circle cx="7" cy="7" r="6.500" fill="#9aa5a8"/><path d="M.5 7h13M2 3.500h10M2 10.500h10M7 .5v13" stroke="#e3e7e8" stroke-width=".7"/></symbol>
<symbol id="msg" viewBox="0 0 16 16"><path d="M8 1c5 0 7 3 7 6s-2 6-6 6l-2 3v-3C3 13 1 10 1 7s2-6 7-6z" fill="#6e7a7a"/><path d="M4.500 7h7" stroke="#fff" stroke-width="1.800" stroke-dasharray="1.800 1"/></symbol>
</defs>
</svg>

<header class="title">
  <svg class="ttl-ic"><use href="#winq"/></svg>
  <span class="ttl-txt">*Projeto sem título — QGIS</span>
  <div class="winbtns">
    <span class="wb"><span class="wmin"></span></span>
    <span class="wb"><span class="wmax"></span></span>
    <span class="wb wx">✕</span>
  </div>
</header>

<nav class="menu">
  <span>Projeto</span><span><u>E</u>ditar</span><span><u>E</u>xibir</span><span><u>C</u>amada</span><span><u>C</u>onfigurações</span><span><u>C</u>omplementos</span><span>Vet<u>o</u>r</span><span><u>R</u>aster</span><span><u>B</u>anco de Dados</span><span><u>W</u>eb</span><span><u>M</u>alha</span><span>DSGTools</span><span>MMQGIS</span><span>SCP</span><span>Pro<u>c</u>essamento</span><span><u>A</u>juda</span>
</nav>

<section class="row r1">
  <i class="grip"></i>
  <svg class="ic"><use href="#doc"/></svg><svg class="ic"><use href="#folder"/></svg><svg class="ic"><use href="#floppy"/></svg><svg class="ic"><use href="#prj"/></svg><svg class="ic"><use href="#layout"/></svg><svg class="ic"><use href="#style"/></svg>
  <i class="gap16"></i>
  <svg class="ic on"><use href="#hand"/></svg><svg class="ic off"><use href="#panmap"/></svg><svg class="ic"><use href="#zin"/></svg><svg class="ic"><use href="#zout"/></svg><svg class="ic"><use href="#zfull"/></svg><svg class="ic off"><use href="#mag"/></svg><svg class="ic off"><use href="#mag"/></svg><svg class="ic off"><use href="#mag1"/></svg><svg class="ic off"><use href="#magb"/></svg><svg class="ic off"><use href="#magb"/></svg><svg class="ic off"><use href="#newmap"/></svg><svg class="ic off"><use href="#new3d"/></svg><svg class="ic"><use href="#bkm"/></svg><svg class="ic off"><use href="#book"/></svg><svg class="ic"><use href="#clock"/></svg><svg class="ic"><use href="#refresh"/></svg>
  <i class="gap16"></i>
  <svg class="ic"><use href="#ident"/></svg><svg class="ic off"><use href="#abacus"/></svg><svg class="ic"><use href="#gear"/></svg><svg class="ic"><use href="#sigma"/></svg><svg class="ic off"><use href="#attr"/></svg><b class="dd"></b><svg class="ic"><use href="#ruler"/></svg><b class="dd"></b><svg class="ic"><use href="#tip"/></svg><svg class="ic off"><use href="#csearch"/></svg><b class="dd"></b>
  <i class="gap16"></i>
  <svg class="ic"><use href="#lgreen"/></svg><svg class="ic"><use href="#colmap"/></svg>
  <i class="gap16"></i>
  <svg class="ic"><use href="#help"/></svg>
  <i class="gap16"></i>
  <svg class="ic"><use href="#db"/></svg><b class="dd"></b><svg class="ic"><use href="#ybar"/></svg><b class="dd"></b><svg class="ic"><use href="#dbx"/></svg><b class="dd"></b><svg class="ic"><use href="#cloud"/></svg><svg class="ic off"><use href="#wire"/></svg><svg class="ic off"><use href="#home"/></svg><svg class="ic off"><use href="#plug"/></svg><b class="dd t"></b><svg class="ic"><use href="#tag"/></svg><b class="dd t"></b>
  <svg class="fr"><use href="#globe"/></svg><svg class="fr"><use href="#fmag"/></svg><svg class="fr"><use href="#flay"/></svg><i class="gap10"></i><svg class="fr"><use href="#fchart"/></svg><i class="gap10"></i><svg class="fr"><use href="#fdb"/></svg>
</section>

<section class="row r2">
  <i class="grip"></i>
  <svg class="ic"><use href="#layers"/></svg><svg class="ic"><use href="#addpkg"/></svg><svg class="ic"><use href="#addvec"/></svg><svg class="ic"><use href="#feather"/></svg><svg class="ic"><use href="#chip"/></svg><svg class="ic"><use href="#mesh"/></svg>
  <i class="gap8"></i>
  <svg class="ic"><use href="#vframe"/></svg>
  <i class="gap22"></i>
  <svg class="ic off"><use href="#dpen"/></svg><svg class="ic off"><use href="#dpen2"/></svg><svg class="ic off"><use href="#dsave"/></svg><svg class="ic off"><use href="#dpts"/></svg><svg class="ic off"><use href="#dedit"/></svg><b class="dd fade"></b><svg class="ic off"><use href="#dsheet"/></svg><svg class="ic off"><use href="#trash"/></svg><svg class="ic off"><use href="#cut"/></svg><svg class="ic off"><use href="#copy"/></svg><svg class="ic off"><use href="#paste"/></svg><svg class="ic off"><use href="#undo"/></svg><svg class="ic off"><use href="#redo"/></svg>
  <i class="gap16"></i>
  <svg class="ic off"><use href="#abcg"/></svg><svg class="ic off"><use href="#stk"/></svg>
  <i class="gap8"></i>
  <svg class="ic"><use href="#abpin"/></svg><svg class="ic"><use href="#abcr"/></svg>
  <i class="gap8"></i>
  <svg class="ic off"><use href="#abcg2"/></svg><svg class="ic off"><use href="#abcg2"/></svg><svg class="ic off"><use href="#abcg2"/></svg><svg class="ic off"><use href="#abcg2"/></svg><svg class="ic off"><use href="#abcg2"/></svg>
  <i class="gap16"></i>
  <svg class="ic"><use href="#gadd"/></svg><svg class="ic"><use href="#gfind"/></svg><svg class="ic"><use href="#gbin"/></svg>
  <i class="gap16"></i>
  <svg class="ic"><use href="#magnet"/></svg><svg class="ic off"><use href="#snap"/></svg><svg class="ic on2 off"><use href="#spts"/></svg>
  <div class="spin off-txt"><span>12</span><i class="spinb"></i></div>
  <div class="combo off-txt"><span>px</span><b class="dd fade"></b></div>
  <i class="gap2"></i>
  <svg class="ic"><use href="#ytree"/></svg><svg class="ic"><use href="#gmap"/></svg><svg class="ic off"><use href="#xgr"/></svg><svg class="ic off"><use href="#xgr2"/></svg><b class="dd fade"></b><svg class="ic off"><use href="#bones"/></svg>
  <i class="gap33"></i>
  <svg class="ic"><use href="#py"/></svg><svg class="ic"><use href="#net"/></svg><svg class="ic"><use href="#dark"/></svg><svg class="ic"><use href="#dia"/></svg><svg class="ic"><use href="#pblack"/></svg><svg class="ic"><use href="#tree"/></svg>
</section>

<section class="row r3">
  <i class="grip"></i>
  <svg class="ic off"><use href="#dhist"/></svg><svg class="ic off"><use href="#dhist"/></svg><svg class="ic off"><use href="#dhist"/></svg><svg class="ic off"><use href="#dhist"/></svg><svg class="ic off"><use href="#dsun"/></svg>
  <span class="more">»</span>
  <svg class="ic off"><use href="#set"/></svg>
  <i class="gap7"></i>
  <svg class="ic off"><use href="#dnode"/></svg><b class="dd t fade"></b><svg class="ic off"><use href="#dpts"/></svg><b class="dd t fade"></b>
  <svg class="ic off"><use href="#b1"/></svg><svg class="ic off"><use href="#b2"/></svg><svg class="ic off"><use href="#b3"/></svg><svg class="ic off"><use href="#b4"/></svg><svg class="ic off"><use href="#b5"/></svg><svg class="ic off"><use href="#b4"/></svg><svg class="ic off"><use href="#b2"/></svg><svg class="ic off"><use href="#b5"/></svg><svg class="ic off"><use href="#b6"/></svg><svg class="ic off"><use href="#b7"/></svg><svg class="ic off"><use href="#b8"/></svg><svg class="ic off"><use href="#b9"/></svg><svg class="ic off"><use href="#b10"/></svg><svg class="ic off"><use href="#b10"/></svg><svg class="ic off"><use href="#b11"/></svg><svg class="ic off"><use href="#b12"/></svg><svg class="ic off"><use href="#b13"/></svg><b class="dd fade"></b>
  <i class="gap16"></i>
  <svg class="ic off"><use href="#b14"/></svg><svg class="ic off"><use href="#b15"/></svg><b class="dd fade"></b><svg class="ic off"><use href="#b16"/></svg><svg class="ic off"><use href="#b17"/></svg><b class="dd fade"></b>
  <i class="gap16"></i>
  <svg class="ic"><use href="#chart"/></svg>
  <i class="gap16"></i>
  <svg class="ic off"><use href="#b18"/></svg><b class="dd fade"></b><svg class="ic off"><use href="#b19"/></svg><b class="dd fade"></b><svg class="ic"><use href="#ydel"/></svg><b class="dd"></b><svg class="ic"><use href="#ypin"/></svg>
  <i class="gap16"></i>
  <svg class="ic"><use href="#share"/></svg>
</section>

<main class="main">
  <aside class="panel">
    <div class="phead"><span>Camadas</span><div class="pbtns"><i class="pb">⧉</i><i class="pb">✕</i></div></div>
    <div class="ptools">
      <svg class="pi"><use href="#t1"/></svg><svg class="pi"><use href="#t2"/></svg><svg class="pi"><use href="#t3"/></svg><svg class="pi"><use href="#t4"/></svg><svg class="pi off"><use href="#t5"/></svg><b class="dd fade"></b><svg class="pi"><use href="#t6"/></svg><svg class="pi"><use href="#t7"/></svg><svg class="pi"><use href="#t8"/></svg>
    </div>
    <div class="tree">
      <div class="node">
        <i class="arrow"></i><svg class="ck"><use href="#chk"/></svg><svg class="ly"><use href="#gr"/></svg><span class="grp">Rotas_Natal_Pico_do_Cabugi</span>
      </div>
      <div class="node ch"><svg class="ck"><use href="#chk"/></svg><svg class="ly"><use href="#pts"/></svg><span>BR-304</span></div>
      <div class="node ch"><svg class="ck"><use href="#chk"/></svg><svg class="ly"><use href="#lin"/></svg><span>BR-304</span></div>
      <div class="node ch"><svg class="ck"><use href="#chk"/></svg><svg class="ly"><use href="#pts"/></svg><span>RN-064 e BR-304</span></div>
      <div class="node ch"><svg class="ck"><use href="#chk"/></svg><svg class="ly"><use href="#lin"/></svg><span>RN-064 e BR-304</span></div>
      <div class="node ch"><svg class="ck"><use href="#chk"/></svg><svg class="ly"><use href="#pts"/></svg><span>Rotas</span></div>
      <svg class="cursor" viewBox="0 0 14 20"><path d="M1 1v15l4-3.500 3 6 2.500-1.200-3-5.800H12z" fill="#fff" stroke="#333"/></svg>
    </div>
  </aside>
  <div class="map">
    <svg class="canvas" viewBox="270 171 1648 840" preserveAspectRatio="none">
      <g class="lgt">
        <polyline points="1188,689 1359,642 1396,608 1408,600 1427,569 1467,519 1475,512 1516,468 1524,436 1551,422 1567,424 1662,546 1705,563 1752,580 1783,591 1801,599 1812,618 1820,631 1858,647 1873,610"/>
        <polyline points="1880,612 1869,642 1856,677 1862,697 1837,745 1832,752 1792,760 1714,735 1673,721 1622,727 1592,724 1567,727 1467,757 1330,729 1324,725 1188,689"/>
      </g>
      <polyline class="drk" points="321,514 332,506 352,503 358,507 374,510 383,508 395,502 405,498 457,501 483,509 503,520 550,537 633,549 643,554 723,571 737,572 770,570 788,576 812,567 839,558 885,558 906,566 918,563 937,567 953,585 980,627 1026,661 1038,662 1188,689"/>
      <rect class="mw" x="305.500" y="497.500" width="7" height="7"/>
      <g class="md">
        <rect x="370.500" y="506.500" width="7" height="7"/><rect x="391.500" y="498.500" width="7" height="7"/><rect x="401.500" y="494.500" width="7" height="7"/><rect x="1184.500" y="685.500" width="7" height="7"/>
      </g>
      <g class="ml">
        <rect x="1463.500" y="753.500" width="7" height="7"/><rect x="1669.500" y="717.500" width="7" height="7"/><rect x="1547.500" y="418.500" width="7" height="7"/><rect x="1701.500" y="559.500" width="7" height="7"/><rect x="1748.500" y="576.500" width="7" height="7"/><rect x="1779.500" y="587.500" width="7" height="7"/><rect x="1797.500" y="595.500" width="7" height="7"/><rect x="1876.500" y="608.500" width="7" height="7"/><rect x="1865.500" y="638.500" width="7" height="7"/><rect x="1854.500" y="643.500" width="7" height="7"/><rect x="1828.500" y="748.500" width="7" height="7"/>
      </g>
      <rect class="mk" x="1869.500" y="606.500" width="7" height="7"/>
    </svg>
  </div>
</main>

<footer class="status">
  <div class="loc"><svg class="loc-ic"><use href="#srch"/></svg><span>Escreva para localizar (Ctrl+K)</span></div>
  <div class="sright">
    <span>Coordenada</span>
    <span class="fld f-coord">-36,3447 -5,5357</span>
    <svg class="si"><use href="#coordic"/></svg>
    <span>Escala</span>
    <span class="fld f-scale">1:280371<b class="dd"></b></span>
    <svg class="si lk"><use href="#lock"/></svg>
    <span>Lupa</span>
    <span class="fld f-num">100%<i class="spinb"></i></span>
    <span>Rotação</span>
    <span class="fld f-num">0,0 °<i class="spinb"></i></span>
    <svg class="ck2"><use href="#chk"/></svg>
    <span>Renderizar</span>
    <span class="crs"><svg class="gs"><use href="#gsmall"/></svg>EPSG:4326</span>
    <svg class="si ms"><use href="#msg"/></svg>
  </div>
</footer>

<footer class="task">
  <span class="tw"><svg class="ti tiw"><use href="#win"/></svg></span>
  <span class="tk"><svg class="ti"><use href="#wfolder"/></svg></span>
  <span class="tk"><svg class="ti"><use href="#chrome"/></svg></span>
  <span class="tk"><svg class="ti"><use href="#ff"/></svg></span>
  <span class="tk act"><svg class="ti"><use href="#winq"/></svg></span>
  <span class="tk"><svg class="ti"><use href="#note"/></svg></span>
  <span class="tk"><svg class="ti"><use href="#obs"/></svg></span>
</footer>
</body>
</html>
```

FILE: styles.css
```css
* { box-sizing: border-box; }
html, body { margin: 0; height: 100%; }
body {
  width: 1920px; height: 1080px; overflow: hidden;
  display: flex; flex-direction: column;
  background: #f0f0f0; color: #3a3a3a;
  font-family: "Liberation Sans", Arial, sans-serif; font-size: 12px;
}
.defs { display: none; }
.svt { font-family: "Liberation Sans", Arial, sans-serif; }
.svb { font-weight: 700; }
i, b { font-style: normal; font-weight: 400; display: block; }

.title { height: 23px; background: #fff; display: flex; align-items: center; padding-left: 2px; flex: none; }
.ttl-ic { width: 18px; height: 18px; }
.ttl-txt { margin-left: 3px; font-size: 11.8px; color: #333; }
.winbtns { margin-left: auto; display: flex; align-items: center; padding-right: 3px; }
.wb { width: 45px; height: 20px; display: flex; align-items: center; justify-content: center; color: #222; font-size: 14px; }
.wmin { width: 10px; height: 1px; background: #333; }
.wmax { width: 9px; height: 10px; border: 1px solid #333; box-shadow: 2px -2px 0 -1px #f0f0f0, 2px -2px 0 0 #333; background: #fff; }
.wx { font-size: 15px; }

.menu { height: 21px; flex: none; background: #eeeeee; display: flex; align-items: center; padding-left: 3px; border-bottom: 1px solid #dcdcdc; font-size: 11.6px; color: #333; }
.menu span { padding: 0 6.900px; white-space: nowrap; }
.menu u { text-underline-offset: 2px; }

.row { flex: none; display: flex; align-items: center; background: #f6f6f6; border-bottom: 2px solid #cfcfcf; }
.r1 { height: 48px; }
.r2 { height: 40px; }
.r3 { height: 39px; }
.grip { width: 12px; height: 26px; flex: none; background: radial-gradient(#dedede 1px, transparent 1.2px) 0 0 / 3px 3px; background-clip: content-box; padding: 0 4px; }
.ic { width: 33px; height: 24px; flex: none; }
.off { opacity: .36; }
.on { height: 36px; background: #dcdcdc; border: 1px solid #c3c3c3; border-radius: 2px; padding: 6px 0; opacity: 1; }
.on2 { height: 36px; background: #c8c8c8; opacity: .55; border-radius: 2px; }
.fr { width: 26px; height: 28px; margin: 0 4.500px; padding: 2px; flex: none; background: #fbfbfb; border: 1px solid #c4c4c4; border-radius: 2px; }
.dd { width: 12px; height: 8px; flex: none; position: relative; }
.dd::after { content: ""; position: absolute; left: 2px; top: 2px; border: 4px solid transparent; border-top: 4px solid #555; border-bottom: 0; }
.dd.t { width: 9px; }
.dd.t::after { left: 0; }
.dd.fade { opacity: .45; }
.gap2 { width: 2px; flex: none; }
.gap7 { width: 7px; flex: none; }
.gap8 { width: 8px; flex: none; }
.gap10 { width: 10px; flex: none; }
.gap16, .gap22, .gap33 { flex: none; height: 24px; background: radial-gradient(#e0e0e0 1px, transparent 1.2px) center / 3px 3px; background-clip: content-box; }
.gap16 { width: 16px; padding: 0 6px; }
.gap22 { width: 22px; padding: 0 9px; }
.gap33 { width: 33px; padding: 0 13px; }
.spin, .combo { height: 23px; flex: none; display: flex; align-items: center; border: 1px solid #cfcfcf; border-radius: 2px; padding-left: 5px; font-size: 12px; color: #8a8a8a; }
.spin { width: 81px; background: #e9e9e9; margin-left: 1px; justify-content: space-between; padding-right: 1px; }
.combo { width: 84px; margin-left: 2px; background: #f2f2f2; justify-content: space-between; padding-right: 3px; }
.spinb { width: 13px; height: 19px; flex: none; position: relative; background: linear-gradient(#fff, #f2f2f2); border-left: 1px solid #d5d5d5; }
.spinb::before, .spinb::after { content: ""; position: absolute; left: 3px; border: 3px solid transparent; }
.spinb::before { top: 2px; border-bottom: 4px solid #777; border-top: 0; }
.spinb::after { bottom: 2px; border-top: 4px solid #777; border-bottom: 0; }
.more { width: 56px; flex: none; padding-left: 30px; color: #444; font-size: 13px; }

.main { flex: 1; min-height: 0; display: flex; }
.panel { width: 264px; flex: none; display: flex; flex-direction: column; background: #f0f0f0; }
.phead { height: 20px; flex: none; display: flex; align-items: center; padding: 0 0 0 5px; font-size: 11.600px; color: #333; }
.pbtns { margin-left: auto; display: flex; gap: 2px; padding-right: 0; }
.pb { width: 12px; height: 12px; font-size: 9px; line-height: 10px; text-align: center; border: 1px solid #888; border-radius: 2px; background: #e3e3e3; }
.ptools { height: 30px; flex: none; display: flex; align-items: center; padding: 0 0 4px 4px; }
.pi { width: 25px; height: 18px; flex: none; }
.tree { flex: 1; position: relative; width: 263px; background: #fff; border: 1px solid #c9c9c9; border-left: 0; padding-top: 1px; font-size: 12.100px; }
.node { height: 18px; display: flex; align-items: center; color: #222; font-weight: 700; }
.node.ch { padding-left: 44px; }
.node .grp { font-weight: 400; font-size: 11.400px; color: #333; }
.arrow { width: 0; height: 0; margin: 0 0 0 7px; border: 4px solid transparent; border-top: 5px solid #444; border-bottom: 0; }
.ck { width: 14px; height: 14px; flex: none; }
.node:first-child .ck { margin-left: 10px; }
.ly { width: 16px; height: 16px; flex: none; margin: 0 7px 0 5px; }
.node:first-child .ly { margin: 0 6px 0 5px; }
.cursor { position: absolute; left: 152px; top: 29px; width: 14px; height: 20px; }

.map { flex: 1; margin-left: 6px; margin-right: 2px; background: #fff; border: 1px solid #c6c6c6; border-top: 2px solid #bdbdbd; overflow: hidden; }
.canvas { display: block; width: 100%; height: 100%; }
.canvas polyline { fill: none; stroke-linejoin: round; stroke-linecap: butt; }
.lgt polyline { stroke: #8a80c4; stroke-width: 6; }
.drk { stroke: #4338a4; stroke-width: 5.500; }
.md rect { fill: #5b51ad; stroke: #1c1852; stroke-width: 1.500; }
.ml rect { fill: #8a80c4; stroke: #24205c; stroke-width: 1.500; }
.mw { fill: #fff; stroke: #555; stroke-width: 1.300; }
.mk { fill: #cfcbe9; stroke: #000; stroke-width: 1.700; }

.status { height: 29px; flex: none; display: flex; align-items: center; padding: 1px 6px 0 5px; background: #f0f0f0; font-size: 10.800px; color: #333; }
.loc { width: 259px; height: 22px; background: #fff; border: 1px solid #cfcfcf; border-radius: 2px; display: flex; align-items: center; padding-left: 7px; color: #777; font-size: 10.800px; }
.loc-ic { width: 14px; height: 14px; margin-right: 6px; }
.sright { margin-left: auto; display: flex; align-items: center; gap: 4px; }
.fld { height: 22px; display: flex; align-items: center; justify-content: space-between; background: #fff; border: 1px solid #d2d2d2; border-radius: 2px; padding-left: 5px; }
.f-coord { width: 97px; margin-right: 5px; }
.f-scale { width: 79px; padding-right: 5px; }
.f-num { width: 82px; padding-right: 1px; margin-right: 4px; }
.si { width: 16px; height: 18px; flex: none; margin-right: 4px; }
.lk { width: 14px; margin: 0 2px 0 12px; }
.ck2 { width: 13px; height: 13px; flex: none; margin-left: 4px; }
.crs { display: flex; align-items: center; margin-left: 18px; gap: 2px; letter-spacing: -.25px; }
.gs { width: 14px; height: 14px; }
.ms { margin: 0 0 0 17px; }

.task { height: 40px; flex: none; display: flex; background: #2e3f3a; }
.tw { width: 50px; display: flex; align-items: center; justify-content: center; padding-right: 2px; }
.tk { width: 49px; display: flex; align-items: center; justify-content: center; position: relative; }
.tk::after { content: ""; position: absolute; left: 4.500px; right: 4.500px; bottom: 0; height: 2px; background: #77b6dc; }
.act { background: #56645f; }
.act::after { left: 0; right: 0; }
.ti { width: 24px; height: 24px; }
.tiw { width: 17px; height: 17px; }
```
